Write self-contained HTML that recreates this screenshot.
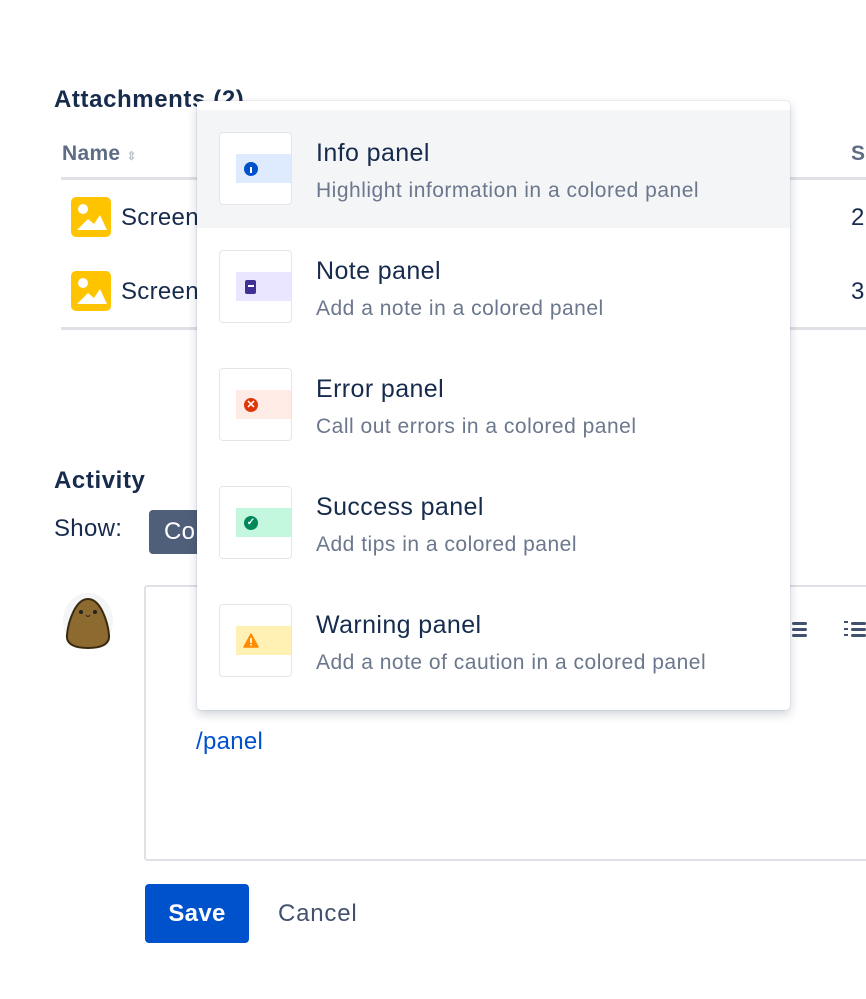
<!DOCTYPE html>
<html><head><style>
*{box-sizing:border-box;margin:0;padding:0}
body{width:866px;height:999px;background:#fff;font-family:"Liberation Sans",sans-serif;color:#172b4d;position:relative;overflow:hidden;letter-spacing:0.3px}
.a{position:absolute}
.h{font-weight:bold;font-size:24px;color:#172b4d;letter-spacing:0.6px}
.line{position:absolute;left:61px;width:805px;height:3px;background:#dfe1e6}
.img{position:absolute;left:71px;width:40px;height:40px;background:#ffc400;border-radius:5px}
.menu{position:absolute;left:197px;top:101px;width:593px;height:609px;background:#fff;border-radius:4px;box-shadow:0 0 1px rgba(9,30,66,.35),0 4px 10px rgba(9,30,66,.2)}
.it{position:absolute;left:0;width:593px;height:118px}
.box{position:absolute;left:22px;top:22px;width:73px;height:73px;border:1px solid #e4e6ea;border-radius:4px;background:#fff;overflow:hidden}
.band{position:absolute;left:16px;top:21px;width:60px;height:29px}
.ic{position:absolute;left:8px;top:8px;width:14px;height:14px;border-radius:50%}
.t{position:absolute;left:119px;top:29px;font-size:25px;color:#172b4d;letter-spacing:0.4px}
.d{position:absolute;left:119px;top:69px;font-size:21px;color:#6b778c;letter-spacing:0.5px}
</style></head><body>
<div class="a h" style="left:54px;top:86px">Attachments (2)</div>
<div class="a" style="left:62px;top:142px;font-size:21px;font-weight:bold;color:#5e6c84">Name <span style="font-size:12px;color:#c1c7d0">⇕</span></div>
<div class="a" style="left:851px;top:142px;font-size:21px;font-weight:bold;color:#5e6c84">S</div>
<div class="line" style="top:177px"></div>
<div class="img" style="top:197px"><svg width="40" height="40"><circle cx="12" cy="12" r="5" fill="#fff"/><path d="M6 33 L17 22 L23 27 L29 18 L36 33Z" fill="#fff"/></svg></div>
<div class="a" style="left:121px;top:204px;font-size:24px">Screen</div>
<div class="a" style="left:851px;top:204px;font-size:24px">2</div>
<div class="img" style="top:271px"><svg width="40" height="40"><circle cx="12" cy="12" r="5" fill="#fff"/><path d="M6 33 L17 22 L23 27 L29 18 L36 33Z" fill="#fff"/></svg></div>
<div class="a" style="left:121px;top:278px;font-size:24px">Screen</div>
<div class="a" style="left:851px;top:278px;font-size:24px">3</div>
<div class="line" style="top:327px"></div>
<div class="a h" style="left:54px;top:467px">Activity</div>
<div class="a" style="left:54px;top:515px;font-size:24px">Show:</div>
<div class="a" style="left:149px;top:510px;width:60px;height:44px;background:#505f79;border-radius:4px;color:#fff;font-size:24px;padding:8px 0 0 15px">Co</div>
<div class="a" style="left:63px;top:593px;width:50px;height:56px;border-radius:50%;background:#f4f5f7"></div>
<svg class="a" style="left:63px;top:595px" width="50" height="56"><path d="M25 4 C38 4 45 28 46 40 C47 50 37 53 25 53 C13 53 3 50 4 40 C5 28 12 4 25 4Z" fill="#8d6a2f" stroke="#3a2a10" stroke-width="2"/><circle cx="18" cy="17" r="2" fill="#222"/><circle cx="32" cy="17" r="2" fill="#222"/><path d="M23 20 q2 3 4 0" stroke="#222" fill="none"/></svg>
<div class="a" style="left:144px;top:585px;width:730px;height:276px;border:2px solid #dfe1e6;border-right:none;border-radius:3px"></div>
<svg class="a" style="left:790px;top:620px" width="20" height="20"><rect x="2" y="2" width="15" height="3" rx="1.5" fill="#42526e"/><rect x="2" y="8" width="15" height="3" rx="1.5" fill="#42526e"/><rect x="2" y="14" width="15" height="3" rx="1.5" fill="#42526e"/></svg>
<svg class="a" style="left:843px;top:620px" width="23" height="20"><rect x="1" y="1" width="4" height="2" fill="#42526e"/><rect x="1" y="8" width="4" height="2" fill="#42526e"/><rect x="1" y="14" width="4" height="2" fill="#42526e"/><rect x="8" y="2" width="15" height="3" rx="1.5" fill="#42526e"/><rect x="8" y="8" width="15" height="3" rx="1.5" fill="#42526e"/><rect x="8" y="14" width="15" height="3" rx="1.5" fill="#42526e"/></svg>
<div class="a" style="left:196px;top:728px;font-size:24px;color:#0052cc">/panel</div>
<div class="a" style="left:145px;top:884px;width:104px;height:59px;background:#0052cc;border-radius:4px;color:#fff;font-size:24px;font-weight:bold;text-align:center;line-height:59px">Save</div>
<div class="a" style="left:278px;top:900px;font-size:24px;color:#42526e;letter-spacing:0.8px">Cancel</div>

<div class="menu">
<div class="it" style="top:9px;background:#f4f5f7"><div class="box"><div class="band" style="background:#deebff"><div class="ic" style="background:#0052cc"><div style="width:2px;height:6px;background:#fff;margin:5px auto 0"></div></div></div></div><div class="t">Info panel</div><div class="d">Highlight information in a colored panel</div></div>
<div class="it" style="top:127px"><div class="box"><div class="band" style="background:#eae6ff"><div class="ic" style="background:#403294;border-radius:2px;width:11px;left:9px"><div style="width:6px;height:2px;background:#fff;margin:5px auto 0"></div></div></div></div><div class="t">Note panel</div><div class="d">Add a note in a colored panel</div></div>
<div class="it" style="top:245px"><div class="box"><div class="band" style="background:#ffebe6"><div class="ic" style="background:#de350b;color:#fff;font-size:11px;line-height:14px;text-align:center;font-weight:bold;letter-spacing:0">✕</div></div></div><div class="t">Error panel</div><div class="d">Call out errors in a colored panel</div></div>
<div class="it" style="top:363px"><div class="box"><div class="band" style="background:#c3f8de"><div class="ic" style="background:#00875a;color:#fff;font-size:10px;line-height:14px;text-align:center;font-weight:bold;letter-spacing:0">✓</div></div></div><div class="t">Success panel</div><div class="d">Add tips in a colored panel</div></div>
<div class="it" style="top:481px"><div class="box"><div class="band" style="background:#fff0b3"><svg class="a" style="left:7px;top:7px" width="16" height="15"><path d="M8 1 L15 14 L1 14Z" fill="#ff8b00" stroke="#ff8b00" stroke-linejoin="round" stroke-width="1.5"/><rect x="7.2" y="5" width="1.6" height="5" fill="#fff"/><rect x="7.2" y="11" width="1.6" height="1.6" fill="#fff"/></svg></div></div><div class="t">Warning panel</div><div class="d">Add a note of caution in a colored panel</div></div>
</div>
</body></html>
